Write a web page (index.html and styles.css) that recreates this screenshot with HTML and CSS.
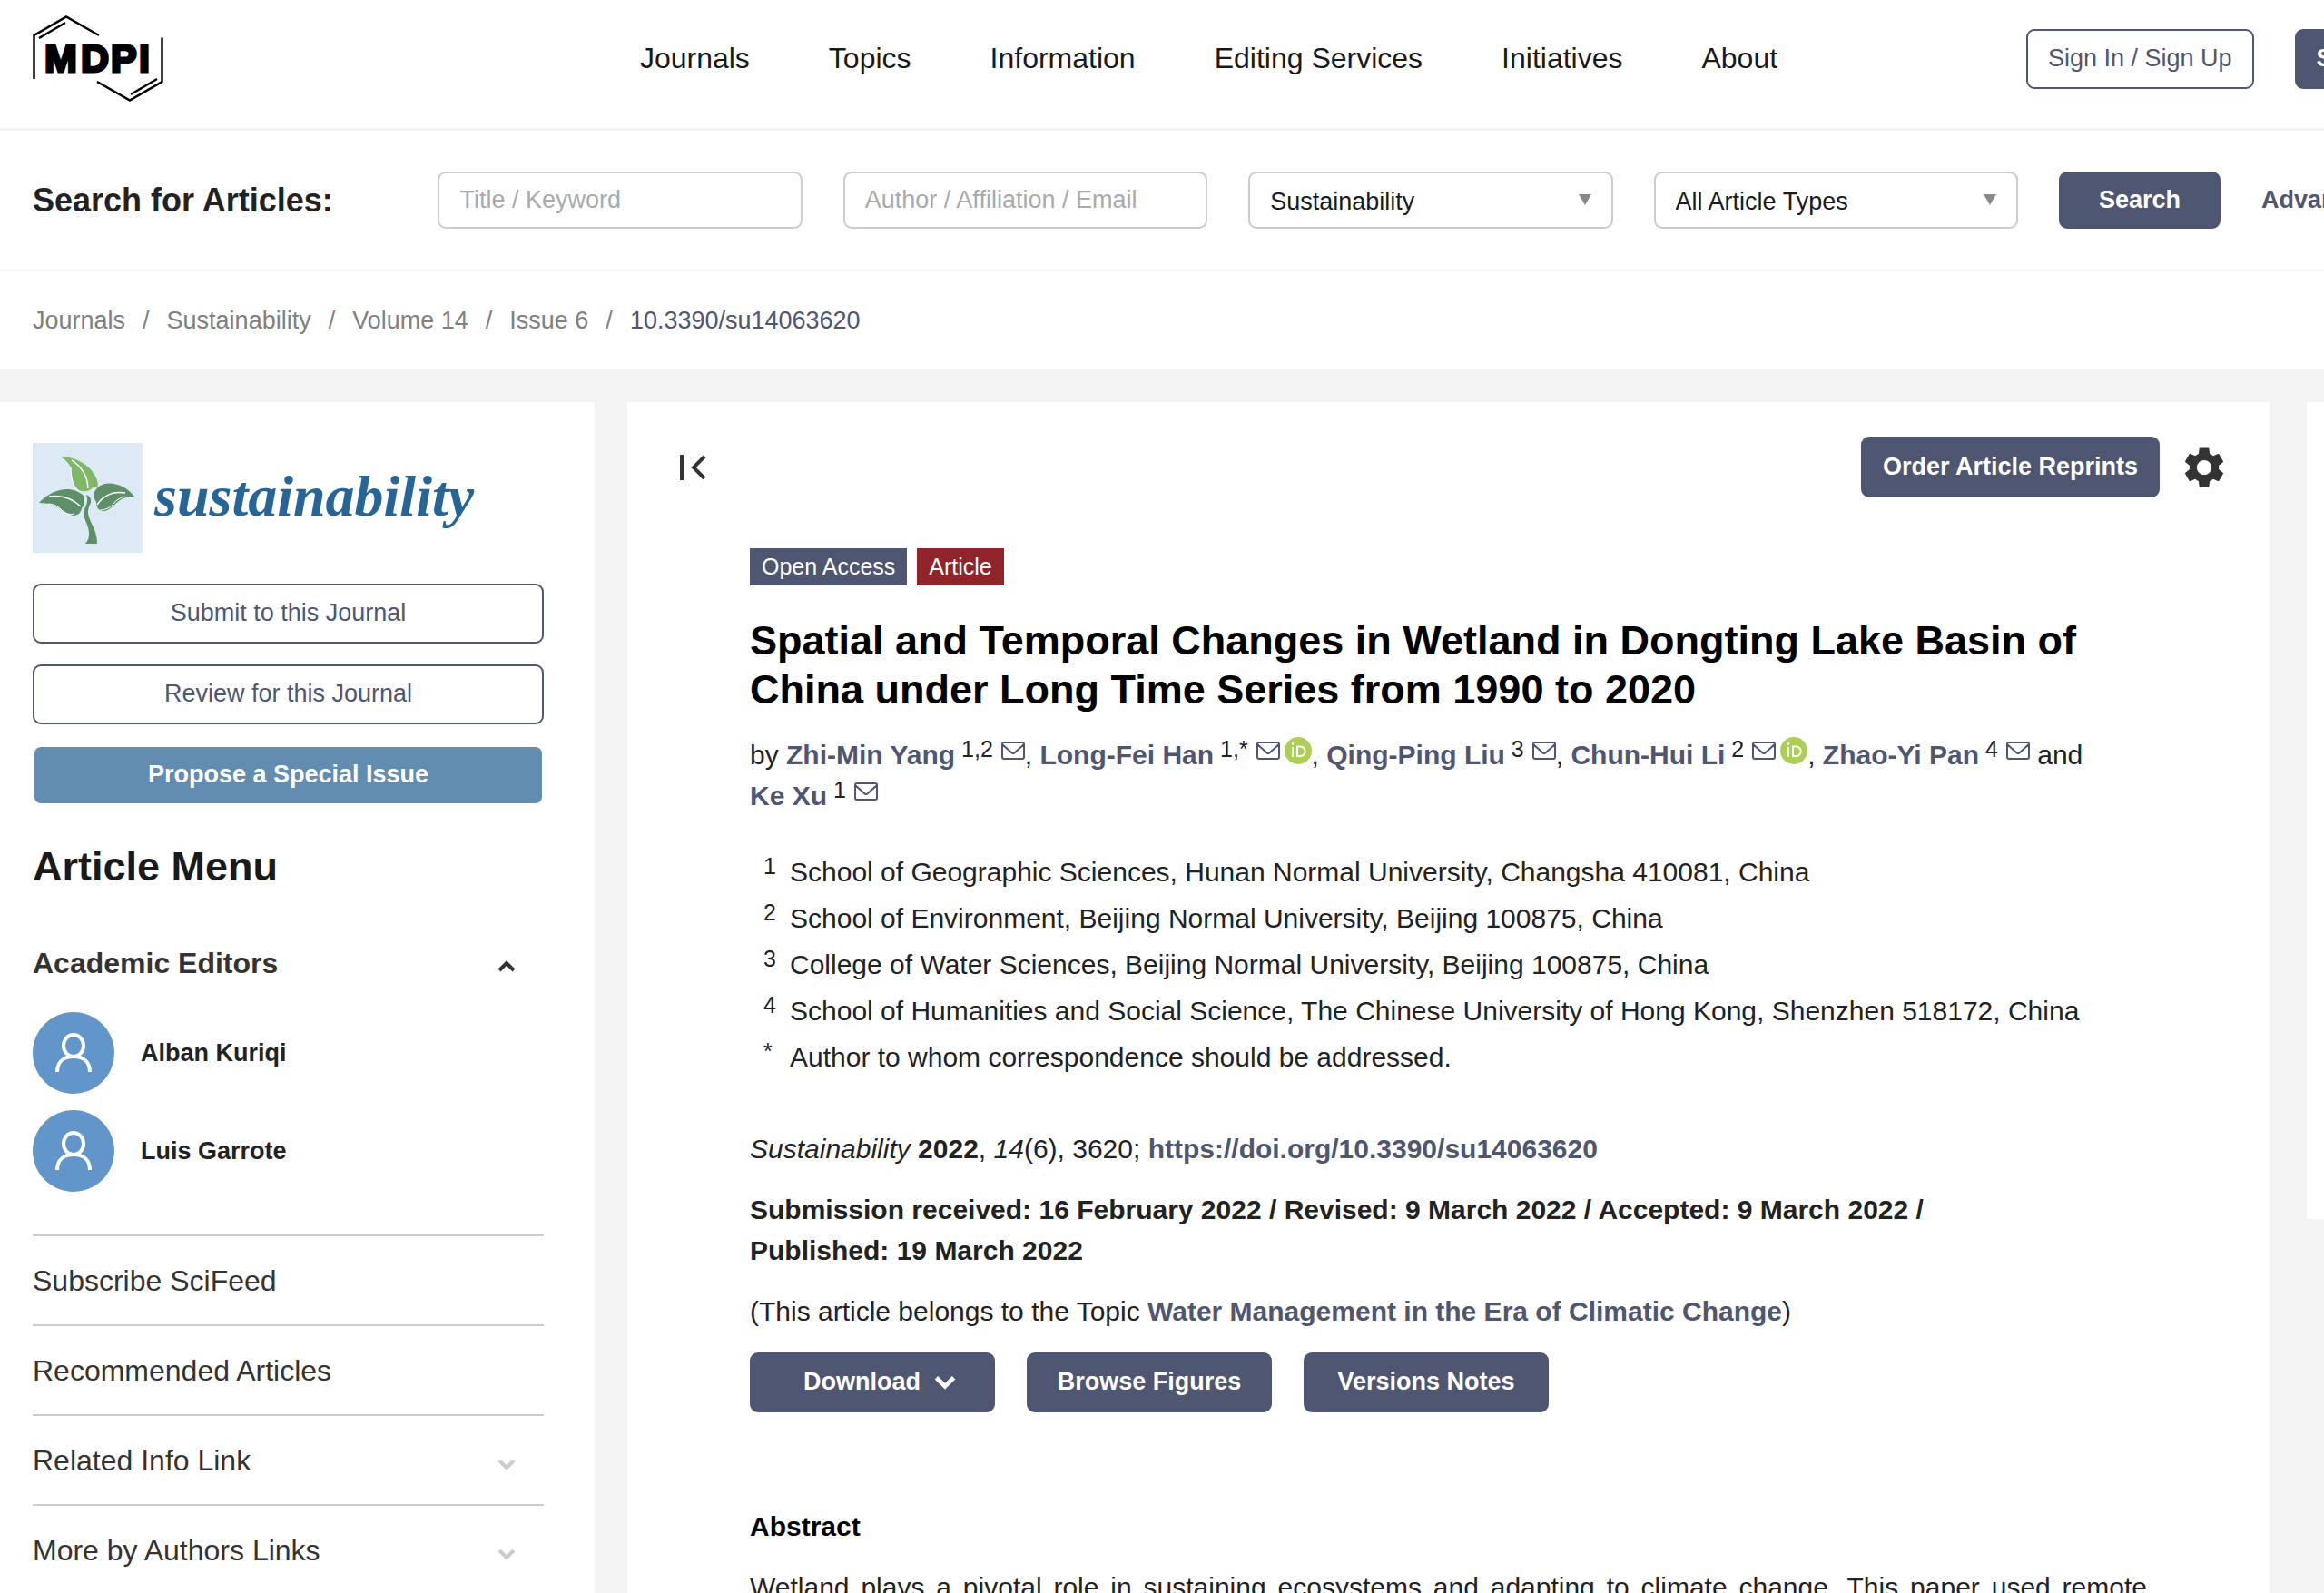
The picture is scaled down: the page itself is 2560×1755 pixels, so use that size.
FILE: index.html
```html
<!DOCTYPE html>
<html lang="en">
<head>
<meta charset="utf-8">
<title>Sustainability | Spatial and Temporal Changes in Wetland in Dongting Lake Basin of China</title>
<link rel="stylesheet" href="styles.css">
</head>
<body>
<svg class="defs" aria-hidden="true">
  <symbol id="mail" viewBox="0 0 26 20"><path d="M3 1h20a2 2 0 0 1 2 2v14a2 2 0 0 1-2 2H3a2 2 0 0 1-2-2V3a2 2 0 0 1 2-2zM1 3l10 9q2 2 4 0l10-9" fill="none" stroke="currentColor" stroke-width="2"/></symbol>
  <symbol id="orcid" viewBox="0 0 30 30"><circle cx="15" cy="15" r="15" fill="#aecf55"/><path d="M9 11v11M14 10.500v10.500h3.500a5.200 5.200 0 0 0 0-10.500z" fill="none" stroke="#fff" stroke-width="2"/><circle cx="9" cy="7.500" r="1.400" fill="#fff"/></symbol>
  <symbol id="person" viewBox="0 0 90 90"><circle cx="45" cy="45" r="45" fill="#6296cb"/><g fill="none" stroke="#fff" stroke-width="4"><ellipse cx="45" cy="37" rx="11" ry="12"/><path d="M27 66C27 55 34 49 45 49S63 55 63 66"/></g></symbol>
  <symbol id="chevron" viewBox="0 0 20 14"><path d="M2 3l8 8 8-8" fill="none" stroke="currentColor" stroke-width="4"/></symbol>
  <symbol id="triangle" viewBox="0 0 14 12"><path d="M0 0h14L7 12z" fill="#888"/></symbol>
</svg>
<div class="page">
  <header class="header">
    <a class="brand" href="#" aria-label="MDPI home">
      <svg width="144" height="95" viewBox="36 17 144 95">
        <g fill="none" stroke="#000" stroke-width="2.500">
          <path d="M37.500 87V39L73 18.500l36 20.500M43 42l29-17M178.500 41.500V90L143 110.500 107 90M173 87l-29 17"/>
        </g>
        <text class="brand-text" x="49 89 122 153" y="79">MDPI</text>
      </svg>
    </a>
    <nav class="nav">
      <a href="#">Journals</a><a href="#">Topics</a><a href="#">Information</a><a href="#">Editing Services</a><a href="#">Initiatives</a><a href="#">About</a>
    </nav>
    <div class="actions">
      <a class="btn outline" href="#">Sign In / Sign Up</a>
      <a class="btn solid" href="#">Submit</a>
    </div>
  </header>

  <form class="search">
    <h2 class="search-title">Search for Articles:</h2>
    <input class="field" type="text" placeholder="Title / Keyword" aria-label="Title / Keyword">
    <input class="field" type="text" placeholder="Author / Affiliation / Email" aria-label="Author / Affiliation / Email">
    <div class="select"><select class="field" aria-label="Journal"><option>Sustainability</option></select><svg><use href="#triangle"/></svg></div>
    <div class="select"><select class="field" aria-label="Article type"><option>All Article Types</option></select><svg><use href="#triangle"/></svg></div>
    <button class="btn solid search-btn" type="button">Search</button>
    <a class="advanced" href="#">Advanced</a>
  </form>

  <nav class="crumbs" aria-label="Breadcrumb">
    <a href="#">Journals</a><span>/</span><a href="#">Sustainability</a><span>/</span><a href="#">Volume 14</a><span>/</span><a href="#">Issue 6</a><span>/</span><a class="current" href="#">10.3390/su14063620</a>
  </nav>

  <div class="columns">
    <aside class="sidebar">
      <a class="journal" href="#">
        <svg width="121" height="121" viewBox="0 0 121 121" aria-hidden="true">
          <path fill="#dde9f5" d="M0 0h121v121H0z"/>
          <path fill="#7fb866" d="M30 15C50 15 70 28 72 46Q71 50 66 49Q63 54 54 53C45 51 43 38 42 28Q39 19 30 15z"/>
          <path fill="#5d9068" d="M7 66C22 50 43 46 56 58Q59 66 54 72Q53 79 45 80C34 78 28 66 7 66zM112 59C97 40 70 40 67 58Q68 62 70 65Q70 73 76 75C90 76 91 58 112 59zM59 57Q65 59 64 66C58 77 62 82 67 93Q71 102 71 111H58Q63 105 62 98C61 88 54 82 57 73Q62 64 59 57z"/>
          <path fill="none" stroke="#fff" stroke-width="1.500" d="M43 19Q60 30 61 50M18 59Q38 56 53 70M102 55Q82 52 71 68"/>
          <path fill="none" stroke="#fff" d="M42 26Q42 47 50 53M17 67Q26 67 33 75Q39 80 46 78M102 59Q93 61 89 67Q83 74 74 74"/>
        </svg>
        <span>sustainability</span>
      </a>
      <div class="stack">
        <a class="btn outline" href="#">Submit to this Journal</a>
        <a class="btn outline" href="#">Review for this Journal</a>
        <a class="btn propose" href="#">Propose a Special Issue</a>
      </div>
      <h2 class="menu-title">Article Menu</h2>
      <h3 class="editors-title">Academic Editors<svg class="chev up"><use href="#chevron"/></svg></h3>
      <ul class="editors">
        <li><svg><use href="#person"/></svg>Alban Kuriqi</li>
        <li><svg><use href="#person"/></svg>Luis Garrote</li>
      </ul>
      <ul class="menu">
        <li><a href="#">Subscribe SciFeed</a></li>
        <li><a href="#">Recommended Articles</a></li>
        <li><a href="#">Related Info Link<svg class="chev"><use href="#chevron"/></svg></a></li>
        <li><a href="#">More by Authors Links<svg class="chev"><use href="#chevron"/></svg></a></li>
      </ul>
    </aside>

    <main class="main">
      <div class="toolbar">
        <button class="icon-btn" type="button" aria-label="Collapse menu"><svg width="30" height="28" viewBox="0 0 30 28"><path d="M3 0v28M28 2L16 14l12 12" fill="none" stroke="#333" stroke-width="4"/></svg></button>
        <a class="btn solid reprints" href="#">Order Article Reprints</a>
        <button class="icon-btn" type="button" aria-label="Settings"><svg width="54" height="54" viewBox="0 0 24 24"><path fill="#333" d="M19.140 12.940c.040-.300.060-.610.060-.940 0-.320-.020-.640-.070-.940l2.030-1.580c.180-.140.230-.410.120-.610l-1.920-3.320c-.120-.220-.370-.290-.590-.220l-2.390.960c-.500-.380-1.030-.700-1.620-.940l-.360-2.540c-.040-.240-.240-.410-.480-.410h-3.840c-.240 0-.430.170-.470.410l-.360 2.540c-.590.240-1.130.570-1.620.940l-2.390-.960c-.220-.080-.470 0-.590.220L2.740 8.870c-.120.210-.080.470.120.610l2.030 1.580c-.050.300-.090.630-.090.940s.020.640.070.940l-2.030 1.580c-.180.140-.230.410-.120.610l1.920 3.320c.120.220.370.290.590.220l2.390-.960c.500.380 1.030.700 1.620.940l.360 2.540c.050.240.240.410.480.410h3.840c.240 0 .440-.170.470-.410l.360-2.540c.590-.240 1.130-.560 1.620-.940l2.390.960c.220.080.470 0 .590-.220l1.920-3.320c.120-.220.070-.470-.120-.610l-2.010-1.580zM12 15.600c-1.980 0-3.600-1.620-3.600-3.600s1.620-3.600 3.600-3.600 3.600 1.620 3.600 3.600-1.620 3.600-3.600 3.600z"/></svg></button>
      </div>
      <article class="article">
        <div class="badges"><span class="badge">Open Access</span><span class="badge red">Article</span></div>
        <h1>Spatial and Temporal Changes in Wetland in Dongting Lake Basin of China under Long Time Series from 1990 to 2020</h1>
        <p class="authors">by <a href="#">Zhi-Min Yang</a><sup> 1,2 </sup><svg class="mail"><use href="#mail"/></svg>, <a href="#">Long-Fei Han</a><sup> 1,* </sup><svg class="mail"><use href="#mail"/></svg><svg class="orcid"><use href="#orcid"/></svg>, <a href="#">Qing-Ping Liu</a><sup> 3 </sup><svg class="mail"><use href="#mail"/></svg>, <a href="#">Chun-Hui Li</a><sup> 2 </sup><svg class="mail"><use href="#mail"/></svg><svg class="orcid"><use href="#orcid"/></svg>, <a href="#">Zhao-Yi Pan</a><sup> 4 </sup><svg class="mail"><use href="#mail"/></svg> and <span class="author"><a href="#">Ke Xu</a><sup> 1 </sup><svg class="mail"><use href="#mail"/></svg></span></p>
        <ul class="affiliations">
          <li><sup>1</sup><span>School of Geographic Sciences, Hunan Normal University, Changsha 410081, China</span></li>
          <li><sup>2</sup><span>School of Environment, Beijing Normal University, Beijing 100875, China</span></li>
          <li><sup>3</sup><span>College of Water Sciences, Beijing Normal University, Beijing 100875, China</span></li>
          <li><sup>4</sup><span>School of Humanities and Social Science, The Chinese University of Hong Kong, Shenzhen 518172, China</span></li>
          <li><sup>*</sup><span>Author to whom correspondence should be addressed.</span></li>
        </ul>
        <div class="details">
          <p><em>Sustainability</em> <b>2022</b>, <em>14</em>(6), 3620; <a href="#">https://doi.org/10.3390/su14063620</a></p>
          <p class="dates"><span>Submission received: 16 February 2022 /</span> <span>Revised: 9 March 2022 /</span> <span>Accepted: 9 March 2022 /</span> <span>Published: 19 March 2022</span></p>
          <p>(This article belongs to the Topic <a href="#">Water Management in the Era of Climatic Change</a>)</p>
          <div class="downloads">
            <button class="btn solid download" type="button">Download<svg><use href="#chevron"/></svg></button>
            <a class="btn solid" href="#">Browse Figures</a>
            <a class="btn solid" href="#">Versions Notes</a>
          </div>
        </div>
        <h2>Abstract</h2>
        <p class="abstract">Wetland plays a pivotal role in sustaining ecosystems and adapting to climate change. This paper used remote</p>
      </article>
    </main>

    <aside class="rail"></aside>
  </div>
</div>
</body>
</html>
```
FILE: styles.css
```css
* { box-sizing: border-box; }

body {
  margin: 0;
  height: 100vh;
  overflow: hidden;
  background: #f4f4f4;
  color: #222;
  font-family: "Liberation Sans", Arial, sans-serif;
  font-size: 27px;
}

h1, h2, h3, p, ul { margin: 0; padding: 0; }
ul { list-style: none; }
a { color: #4f5671; text-decoration: none; }
.defs { display: none; }

/* The page runs a little wider than the window */
.page { width: calc(100% + 144px); }

/* Buttons */
.btn {
  display: flex;
  align-items: center;
  justify-content: center;
  height: 66px;
  padding: 0 22px 1px;
  border: 2px solid #4f5671;
  border-radius: 9px;
  font: 27px "Liberation Sans", Arial, sans-serif;
  white-space: nowrap;
}
.outline { background: #fff; color: #4f5671; }
.solid { background: #4f5671; color: #fff; font-weight: bold; }
.propose {
  background: #628cb0;
  background-clip: padding-box;
  border-color: transparent;
  color: #fff;
  font-weight: bold;
}
.icon-btn { display: flex; padding: 0; border: 0; background: none; }

/* Header */
.header {
  display: grid;
  grid-template-columns: 1fr auto 1fr;
  align-items: center;
  padding: 17px 37px 29px 36px;
  border-bottom: 3px solid #f4f4f4;
  background: #fff;
}
.brand { display: flex; }
.brand-text {
  font-size: 43px;
  font-weight: bold;
  stroke: #000;
  stroke-width: 3px;
}
.nav { display: flex; gap: 87px; margin-right: 40px; padding-bottom: 1px; }
.nav a { color: #1a1a1a; font-size: 32px; }
.actions { display: flex; justify-content: flex-end; gap: 45px; }

/* Search bar */
.search {
  display: grid;
  grid-template-columns: repeat(5, 1fr) 178px 178px;
  align-items: center;
  gap: 45px;
  padding: 45px 35px 45px 36px;
  border-bottom: 2px solid #f4f4f4;
  background: #fff;
}
.search-title { font-size: 36px; white-space: nowrap; }
.field {
  width: 100%;
  height: 63px;
  padding: 0 22px;
  border: 2px solid #ccc;
  border-radius: 9px;
  background: #fff;
  color: #1a1a1a;
  font: 27px "Liberation Sans", Arial, sans-serif;
  appearance: none;
}
input.field { padding-bottom: 1px; }
select.field { padding-top: 2px; }
.field::placeholder { color: #aaa; opacity: 1; }
.select { display: grid; align-items: center; }
.select > * { grid-area: 1 / 1; }
.select svg { justify-self: end; width: 14px; height: 12px; margin: 0 24px 2px 0; pointer-events: none; }
.search-btn { height: 63px; }
.advanced { font-weight: bold; }

/* Breadcrumb */
.crumbs {
  display: flex;
  align-items: center;
  gap: 19px;
  height: 108px;
  padding: 0 36px;
  background: #fff;
  color: #808080;
}
.crumbs a { color: #808080; }
.crumbs .current { color: #4f5671; }

/* Columns */
.columns {
  display: grid;
  grid-template-columns: 655px 1fr 127px;
  column-gap: 36px;
  padding: 36px 36px 0 0;
}
.sidebar { padding: 45px 56px 0 36px; background: #fff; }
.main { margin-right: 5px; background: #fff; }
.rail { height: 900px; background: #fff; }

/* Sidebar */
.journal { display: flex; align-items: center; gap: 13px; }
.journal span {
  padding-bottom: 4px;
  color: #286597;
  font: italic bold 64px "Liberation Serif", "Times New Roman", serif;
}
.stack { display: grid; gap: 23px; margin-top: 34px; }
.menu-title { margin-top: 41px; color: #1a1a1a; font-size: 45px; line-height: 54px; }
.editors-title {
  display: flex;
  align-items: center;
  justify-content: space-between;
  margin-top: 57px;
  color: #333;
  font-size: 32px;
  line-height: 45px;
}
.chev { width: 20px; height: 14px; margin: 6px 31px 0 0; color: #ccc; }
.chev.up { color: #333; transform: rotate(180deg); }
.editors { display: grid; gap: 18px; margin: 31px 0 47px; }
.editors li { display: flex; align-items: center; gap: 29px; font-weight: bold; line-height: 36px; }
.editors svg { width: 90px; height: 90px; }
.menu a {
  display: flex;
  align-items: center;
  justify-content: space-between;
  height: 99px;
  padding-top: 2px;
  border-top: 2px solid #ccc;
  color: #333;
  font-size: 32px;
}

/* Article */
.toolbar { display: flex; align-items: center; padding: 38px 45px 0 57px; }
.reprints { height: 67px; margin: 0 22px 0 auto; }
.article { padding: 56px 135px 0; font-size: 30px; line-height: 45px; }
.article a { font-weight: bold; }
.badges { display: flex; gap: 11px; }
.badge {
  padding: 0 13px;
  background: #4f5671;
  color: #fff;
  font-size: 25px;
  line-height: 41px;
}
.badge.red { background: #8f242a; }
h1 { margin: 34px 0 22px; color: #000; font-size: 45px; line-height: 54px; }
sup { font-size: 25px; line-height: 25px; vertical-align: 8px; }
.mail { width: 26px; height: 20px; margin-left: 2px; color: #4f5671; vertical-align: 5px; }
.orcid { width: 30px; height: 30px; margin: -3px 0 -3px 5px; vertical-align: 3px; }
.author { white-space: nowrap; }
.affiliations { margin: 36px 0 53px; line-height: 51px; }
.affiliations li { display: grid; grid-template-columns: 29px 1fr; align-items: baseline; padding-left: 15px; }
.affiliations sup { position: relative; top: -8px; }
.details { display: grid; gap: 22px; }
.dates { font-weight: bold; }
.dates span { white-space: nowrap; }
.downloads { display: flex; gap: 35px; padding-top: 1px; }
.downloads .btn { width: 270px; }
.download svg { width: 24px; height: 17px; margin-left: 15px; }
.article .download { padding-left: 38px; }
.article h2 { margin: 103px 0 22px; color: #000; font-size: 30px; }
.abstract { text-align: justify; text-align-last: justify; }
.article a.btn { color: #fff; }
```
